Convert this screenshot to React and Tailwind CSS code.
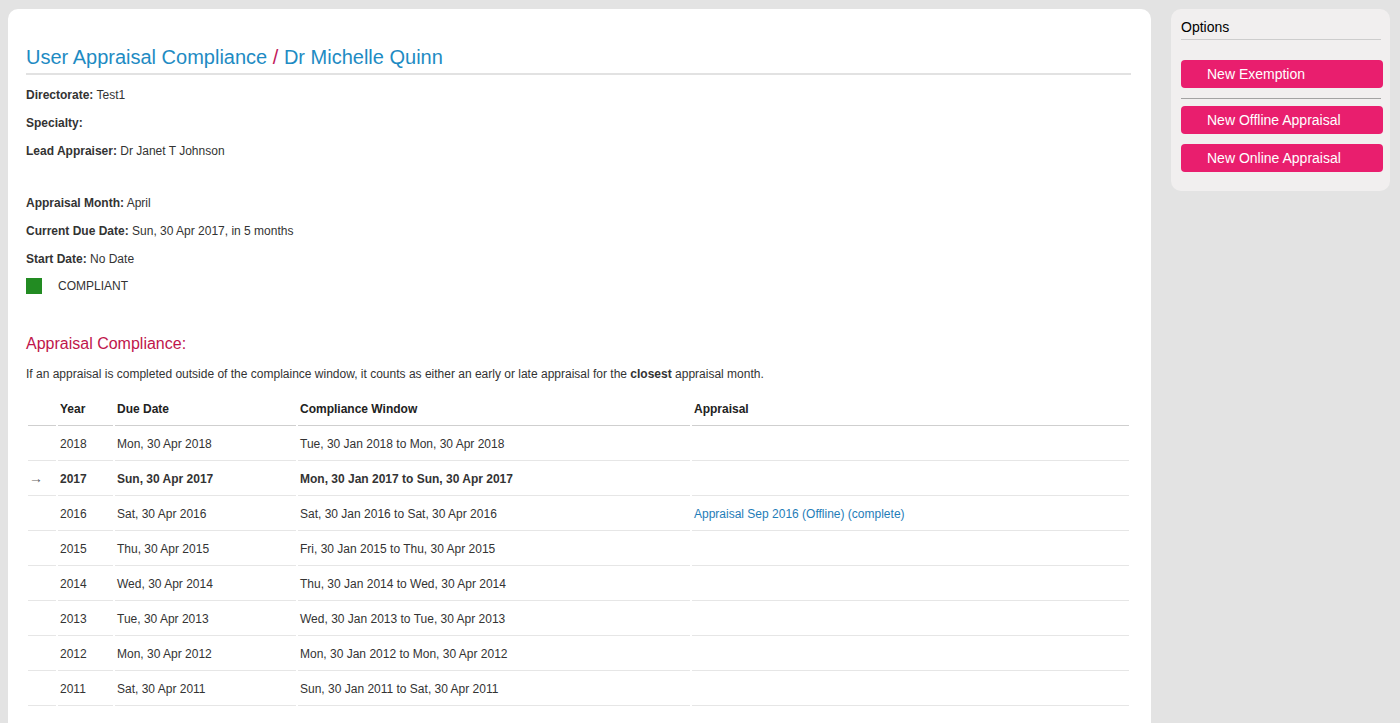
import React from 'react';

const rows = [
  { year: '2018', due: 'Mon, 30 Apr 2018', window: 'Tue, 30 Jan 2018 to Mon, 30 Apr 2018' },
  { year: '2017', due: 'Sun, 30 Apr 2017', window: 'Mon, 30 Jan 2017 to Sun, 30 Apr 2017', current: true },
  { year: '2016', due: 'Sat, 30 Apr 2016', window: 'Sat, 30 Jan 2016 to Sat, 30 Apr 2016', appraisal: true },
  { year: '2015', due: 'Thu, 30 Apr 2015', window: 'Fri, 30 Jan 2015 to Thu, 30 Apr 2015' },
  { year: '2014', due: 'Wed, 30 Apr 2014', window: 'Thu, 30 Jan 2014 to Wed, 30 Apr 2014' },
  { year: '2013', due: 'Tue, 30 Apr 2013', window: 'Wed, 30 Jan 2013 to Tue, 30 Apr 2013' },
  { year: '2012', due: 'Mon, 30 Apr 2012', window: 'Mon, 30 Jan 2012 to Mon, 30 Apr 2012' },
  { year: '2011', due: 'Sat, 30 Apr 2011', window: 'Sun, 30 Jan 2011 to Sat, 30 Apr 2011' },
];

const Field = ({ label, value, className = '' }) => (
  <p className={`text-[12px] leading-[16px] h-[16px] ${className}`}>
    <span className="font-bold">{label}:</span> {value}
  </p>
);

const App = () => {
  return (
    <div
      className="min-h-screen bg-[#e3e3e3] flex items-start gap-[20px] pl-[8px] pt-[9px] text-[#333]"
      style={{ fontFamily: '"Liberation Sans", Arial, Helvetica, sans-serif' }}
    >
      {/* main panel */}
      <div className="w-[1143px] bg-white rounded-[10px] pl-[18px] pr-[20px] pt-[34px] pb-[40px]">
        <h1 className="text-[20px] leading-[28px] text-[#1e8bc3] border-b-2 border-[#e2e2e2] pb-[2px]">
          User Appraisal Compliance <span className="text-[#c2185b]">/</span> Dr Michelle Quinn
        </h1>

        <Field label="Directorate" value="Test1" className="mt-[12px]" />
        <Field label="Specialty" value="" className="mt-[12px]" />
        <Field label="Lead Appraiser" value="Dr Janet T Johnson" className="mt-[12px]" />

        <Field label="Appraisal Month" value="April" className="mt-[36px]" />
        <Field label="Current Due Date" value="Sun, 30 Apr 2017, in 5 months" className="mt-[12px]" />
        <Field label="Start Date" value="No Date" className="mt-[12px]" />

        <div className="flex items-center mt-[11px] h-[16px]">
          <span className="w-[16px] h-[16px] bg-[#228b22] inline-block" />
          <span className="ml-[16px] text-[12px]">COMPLIANT</span>
        </div>

        <h2 className="mt-[40px] text-[16px] leading-[20px] text-[#c0154b]">Appraisal Compliance:</h2>
        <p className="mt-[12px] text-[12px] leading-[16px]">
          If an appraisal is completed outside of the complaince window, it counts as either an early or late appraisal for the{' '}
          <span className="font-bold">closest</span> appraisal month.
        </p>

        <table className="mt-[10px] w-[1105px] border-separate border-spacing-x-[2px] border-spacing-y-0 text-[12px] table-fixed">
          <colgroup>
            <col className="w-[28px]" />
            <col className="w-[55px]" />
            <col className="w-[181px]" />
            <col className="w-[392px]" />
            <col />
          </colgroup>
          <thead>
            <tr className="h-[34px]">
              {['', 'Year', 'Due Date', 'Compliance Window', 'Appraisal'].map((h, i) => (
                <th key={i} className="text-left font-bold text-[#222] pl-[2px] pt-[1px] border-b border-[#cfcfcf] align-middle">
                  {h}
                </th>
              ))}
            </tr>
          </thead>
          <tbody>
            {rows.map((r) => {
              const cell = `pl-[2px] pt-[1px] border-b border-[#e6e6e6] align-middle ${r.current ? 'font-bold text-[#333]' : ''}`;
              return (
                <tr key={r.year} className="h-[35px]">
                  <td className="pl-[1px] pt-[1px] border-b border-[#e6e6e6] align-middle text-[#666] text-[14px]">
                    {r.current ? '→' : ''}
                  </td>
                  <td className={cell}>{r.year}</td>
                  <td className={cell}>{r.due}</td>
                  <td className={cell}>{r.window}</td>
                  <td className={cell}>
                    {r.appraisal && (
                      <span className="text-[#1f7db8]">
                        Appraisal Sep 2016 (Offline) (complete)
                      </span>
                    )}
                  </td>
                </tr>
              );
            })}
          </tbody>
        </table>
      </div>

      {/* options panel */}
      <div className="w-[219px] bg-[#f1efef] rounded-[10px] pl-[10px] pr-[7px] pt-[10px] pb-[19px]">
        <div className="text-[14px] leading-[16px] text-black pb-[4px] border-b border-[#cdcdcd] mr-[2px]">Options</div>
        <button className="mt-[20px] w-full h-[28px] rounded-[4px] bg-[#e91e6e] text-white text-[14px] text-left pl-[26px]">
          New Exemption
        </button>
        <div className="mt-[10px] mb-[7px] border-t border-[#a3a3a3] mr-[2px]" />
        <button className="w-full h-[28px] rounded-[4px] bg-[#e91e6e] text-white text-[14px] text-left pl-[26px]">
          New Offline Appraisal
        </button>
        <button className="mt-[10px] w-full h-[28px] rounded-[4px] bg-[#e91e6e] text-white text-[14px] text-left pl-[26px]">
          New Online Appraisal
        </button>
      </div>
    </div>
  );
};

export default App;
